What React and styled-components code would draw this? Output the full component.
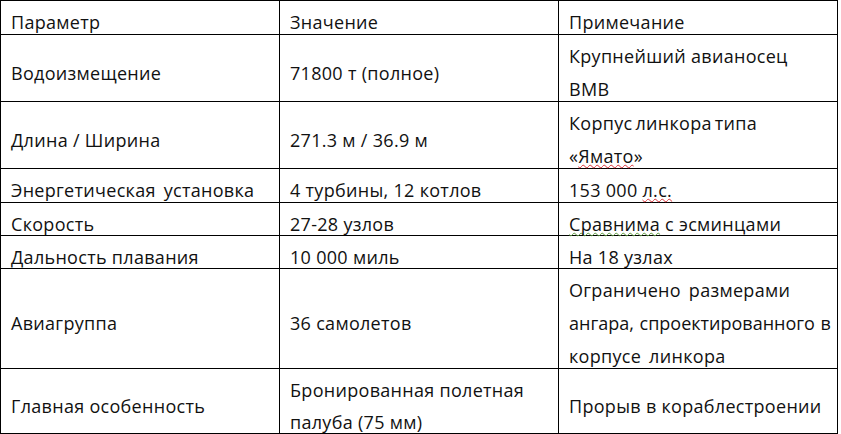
import React from 'react';
import styled, { createGlobalStyle } from 'styled-components';

const Global = createGlobalStyle`
  html, body { margin: 0; padding: 0; background: #fff; }
  body { font-family: "Open Sans", "Noto Sans", sans-serif; color: #111; }
`;

const Table = styled.table`
  border-collapse: collapse;
  table-layout: fixed;
  width: 838px;
  margin: 0;
`;

const Col = styled.col`
  width: 279px;
`;

const Cell = styled.td`
  border: 1px solid #000;
  padding: 0 6px 0 10px;
  vertical-align: middle;
  font-size: 18px;
  letter-spacing: 0.3px;
  line-height: ${p => p.$lh || 33}px;
  white-space: nowrap;
`;

const Text = styled.div`
  padding-top: 5px;
  margin-bottom: -5px;
  word-spacing: ${p => p.$ws || 'normal'};
  letter-spacing: ${p => p.$ls || 'inherit'};
`;

const Squiggle = styled.span`
  text-decoration-line: underline;
  text-decoration-style: wavy;
  text-decoration-color: ${p => p.$color};
  text-decoration-thickness: 1px;
  text-underline-offset: 1px;
  text-decoration-skip-ink: none;
`;

const rows = [
  { lh: 33, cells: [['Параметр'], ['Значение'], ['Примечание']] },
  { lh: 33, cells: [['Водоизмещение'], ['71800 т (полное)'], ['Крупнейший авианосец', 'ВМВ']] },
  {
    lh: 33,
    cells: [
      ['Длина / Ширина'],
      ['271.3 м / 36.9 м'],
      [
        { text: 'Корпус линкора типа', ws: '-2px' },
        <>«<Squiggle $color="#d8323a">Ямато</Squiggle>»</>,
      ],
    ],
  },
  {
    lh: 33,
    cells: [
      [{ text: 'Энергетическая установка', ws: '3px' }],
      ['4 турбины, 12 котлов'],
      [<>153 000 <Squiggle $color="#d8323a">л.с.</Squiggle></>],
    ],
  },
  {
    lh: 32,
    cells: [
      ['Скорость'],
      ['27-28 узлов'],
      [<><Squiggle $color="#5b9a3c">Сравнима</Squiggle> с эсминцами</>],
    ],
  },
  { lh: 32, cells: [['Дальность плавания'], ['10 000 миль'], ['На 18 узлах']] },
  {
    lh: 33,
    cells: [
      ['Авиагруппа'],
      ['36 самолетов'],
      [
        { text: 'Ограничено размерами', ws: '3px' },
        { text: 'ангара, спроектированного в', ws: '1px', ls: '0px' },
        { text: 'корпусе линкора', ws: '3px' },
      ],
    ],
  },
  {
    lh: 32,
    cells: [
      ['Главная особенность'],
      ['Бронированная полетная', 'палуба (75 мм)'],
      ['Прорыв в кораблестроении'],
    ],
  },
];

function Line({ item }) {
  if (item && typeof item === 'object' && 'text' in item) {
    return (
      <Text $ws={item.ws} $ls={item.ls}>
        {item.text}
      </Text>
    );
  }
  return <Text>{item}</Text>;
}

export default function App() {
  return (
    <>
      <Global />
      <Table>
        <colgroup>
          <Col />
          <Col />
          <Col />
        </colgroup>
        <tbody>
          {rows.map((row, i) => (
            <tr key={i}>
              {row.cells.map((lines, j) => (
                <Cell key={j} $lh={row.lh}>
                  {lines.map((l, k) => (
                    <Line key={k} item={l} />
                  ))}
                </Cell>
              ))}
            </tr>
          ))}
        </tbody>
      </Table>
    </>
  );
}
